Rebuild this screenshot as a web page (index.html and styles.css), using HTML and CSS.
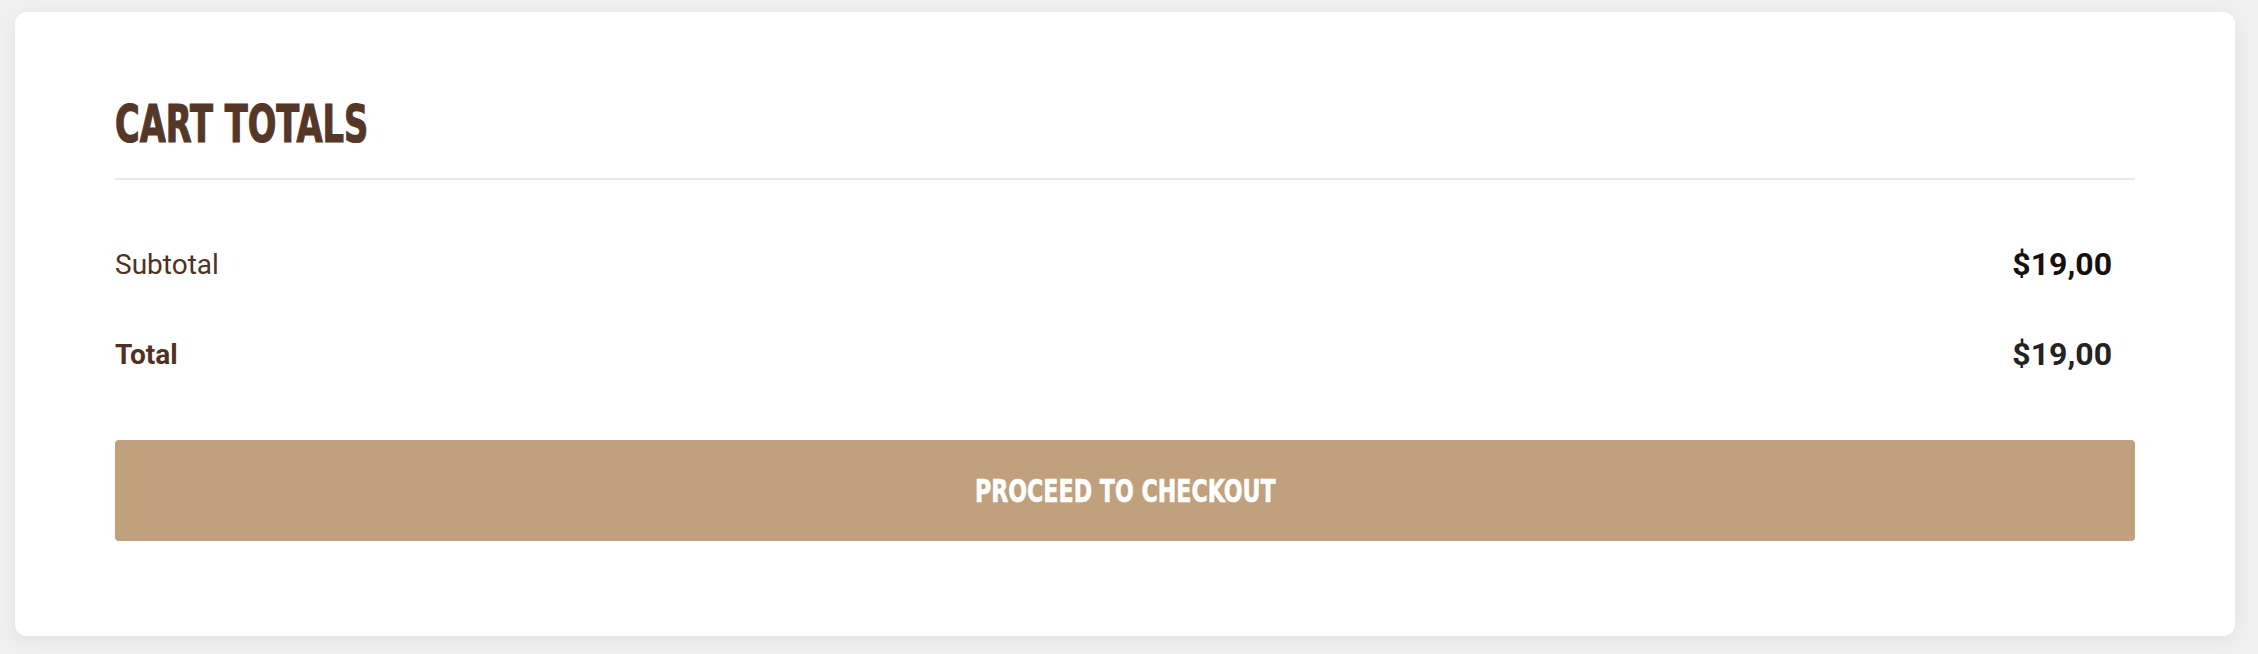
FILE: index.html
```html
<!DOCTYPE html>
<html lang="en">
<head>
<meta charset="utf-8">
<title>Cart totals</title>
<link rel="stylesheet" href="styles.css">
</head>
<body>
<div class="card">
  <div class="card-head">
    <h2 class="title"><span class="squeeze title-text">CART TOTALS</span></h2>
  </div>
  <div class="rows">
    <div class="row">
      <span class="label">Subtotal</span>
      <span class="amount amount-sub">$19,00</span>
    </div>
    <div class="row">
      <span class="label label-strong">Total</span>
      <span class="amount amount-total">$19,00</span>
    </div>
  </div>
  <a class="checkout" href="#"><span class="squeeze btn-text">PROCEED TO CHECKOUT</span></a>
</div>
</body>
</html>
```

FILE: styles.css
```css
html, body {
  margin: 0;
  padding: 0;
}
body {
  background: #f0f0f0;
  width: 2258px;
  height: 654px;
  overflow: hidden;
  font-family: Roboto, "Liberation Sans", sans-serif;
}
.card {
  margin: 12px 23px 0 15px;
  background: #ffffff;
  border-radius: 12px;
  box-shadow: 0 4px 22px rgba(0, 0, 0, 0.06);
  padding: 86px 100px 95px 100px;
}
.card-head {
  padding-bottom: 28px;
  border-bottom: 2px solid #e8e8e8;
}
.title {
  margin: 0;
  font-family: "DejaVu Sans Condensed", "Liberation Sans", sans-serif;
  font-weight: 700;
  font-size: 52px;
  line-height: 52px;
  height: 52px;
  color: #543727;
  white-space: nowrap;
  -webkit-text-stroke: 1.2px #543727;
}
.squeeze {
  display: inline-block;
  transform-origin: left center;
}
.title-text {
  transform: scaleX(0.72);
}
.rows {
  margin-top: 39px;
}
.row {
  height: 90px;
  display: flex;
  align-items: center;
  justify-content: space-between;
}
.label {
  font-size: 28px;
  color: #4f3222;
  font-weight: 400;
}
.label-strong {
  font-weight: 700;
}
.amount {
  font-size: 32px;
  font-weight: 700;
  padding-right: 23px;
}
.amount-sub {
  color: #17110d;
}
.amount-total {
  color: #232323;
}
.checkout {
  margin-top: 41px;
  height: 101px;
  display: flex;
  align-items: center;
  justify-content: center;
  background: #c0a07d;
  border-radius: 4px;
  text-decoration: none;
  color: #ffffff;
  font-family: "DejaVu Sans Condensed", "Liberation Sans", sans-serif;
  font-weight: 700;
  font-size: 32px;
  white-space: nowrap;
  -webkit-text-stroke: 0.6px #ffffff;
}
.btn-text {
  transform: scaleX(0.77);
  transform-origin: center center;
}
```
